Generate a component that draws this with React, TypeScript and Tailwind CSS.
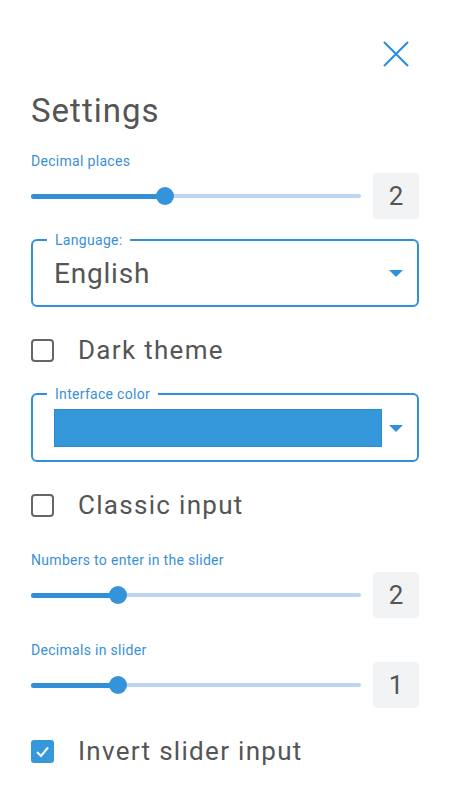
import { useState } from 'react';

const TEXT = 'text-[#555555]';

function CloseIcon() {
  return (
    <svg width="26" height="26" viewBox="0 0 26 26" fill="none" aria-label="Close">
      <path d="M1 1L25 25M25 1L1 25" stroke="#2f8fdc" strokeWidth="2.2" />
    </svg>
  );
}

function Caret() {
  return (
    <svg width="14" height="7" viewBox="0 0 14 7" className="shrink-0">
      <path d="M0 0H14L7 7Z" fill="#3090dc" />
    </svg>
  );
}

function Slider({ pct }: { pct: number }) {
  return (
    <div className="relative flex-1 h-[18px]">
      <div className="absolute left-0 right-0 top-[7px] h-[4px] rounded-full bg-[#bcd6f1]" />
      <div
        className="absolute left-0 top-[6.5px] h-[5px] rounded-full bg-[#318ed9]"
        style={{ width: `${pct}%` }}
      />
      <div
        className="absolute top-0 w-[18px] h-[18px] -ml-[9px] rounded-full bg-[#3494db]"
        style={{ left: `${pct}%` }}
      />
    </div>
  );
}

function SliderRow({ label, value, pct, mt }: { label: string; value: number; pct: number; mt: string }) {
  return (
    <>
      <div className={`${mt} text-[14px] leading-[16px] tracking-[0.3px] text-[#3a8fd8]`}>{label}</div>
      <div className="mt-[4px] flex items-center gap-[12px] h-[46px]">
        <Slider pct={pct} />
        <div className={`w-[46px] h-[46px] rounded-[4px] bg-[#f2f3f5] flex items-center justify-center text-[26px] leading-[30px] ${TEXT}`}>
          {value}
        </div>
      </div>
    </>
  );
}

function CheckRow({ label, checked, onToggle, mt }: { label: string; checked: boolean; onToggle: () => void; mt: string }) {
  return (
    <button type="button" onClick={onToggle} className={`${mt} flex items-center h-[32px] text-left`}>
      {checked ? (
        <span className="w-[23px] h-[23px] rounded-[3px] bg-[#3498db] flex items-center justify-center">
          <svg width="17" height="17" viewBox="0 0 17 17" fill="none">
            <path d="M3 9L7 13L14 4.5" stroke="#ffffff" strokeWidth="2" />
          </svg>
        </span>
      ) : (
        <span className="w-[23px] h-[23px] rounded-[4px] border-2 border-[#666666]" />
      )}
      <span className={`ml-[24px] text-[26px] leading-[32px] tracking-[1.3px] ${TEXT}`}>{label}</span>
    </button>
  );
}

export default function App() {
  const [dark, setDark] = useState(false);
  const [classic, setClassic] = useState(false);
  const [invert, setInvert] = useState(true);

  return (
    <div className="w-[450px] h-[800px] bg-white px-[31px] pt-[41px] flex flex-col font-[family-name:Roboto,sans-serif]">
      {/* Close */}
      <div className="flex justify-end pr-[10px] h-[26px]">
        <CloseIcon />
      </div>

      <h1 className={`mt-[24px] text-[33px] leading-[40px] tracking-[1px] ${TEXT}`}>Settings</h1>

      <SliderRow label="Decimal places" value={2} pct={40.6} mt="mt-[22px]" />

      {/* Language */}
      <fieldset className="mt-[13px] border-2 border-[#3090dc] rounded-[6px]">
        <legend className="ml-[14px] px-[8px] text-[14px] leading-[16px] tracking-[0.3px] text-[#3a8fd8]">
          Language:
        </legend>
        <div className="h-[57px] pb-[6px] pl-[21px] pr-[14px] flex items-center justify-between">
          <span className={`text-[28px] leading-[32px] tracking-[0.8px] ${TEXT}`}>English</span>
          <Caret />
        </div>
      </fieldset>

      <CheckRow label="Dark theme" checked={dark} onToggle={() => setDark(!dark)} mt="mt-[27px]" />

      {/* Interface color */}
      <fieldset className="mt-[20px] border-2 border-[#3090dc] rounded-[6px]">
        <legend className="ml-[14px] px-[8px] text-[14px] leading-[16px] tracking-[0.3px] text-[#3a8fd8]">
          Interface color
        </legend>
        <div className="h-[58px] pt-[7px] pl-[21px] pr-[14px] flex items-start">
          <div className="flex-1 h-[38px] mr-[7px] bg-[#3498db] border border-[#2e8acb]" />
          <div className="h-[38px] flex items-center">
            <Caret />
          </div>
        </div>
      </fieldset>

      <CheckRow label="Classic input" checked={classic} onToggle={() => setClassic(!classic)} mt="mt-[27px]" />

      <SliderRow label="Numbers to enter in the slider" value={2} pct={26.4} mt="mt-[31px]" />
      <SliderRow label="Decimals in slider" value={1} pct={26.4} mt="mt-[24px]" />

      <CheckRow label="Invert slider input" checked={invert} onToggle={() => setInvert(!invert)} mt="mt-[27px]" />
    </div>
  );
}
